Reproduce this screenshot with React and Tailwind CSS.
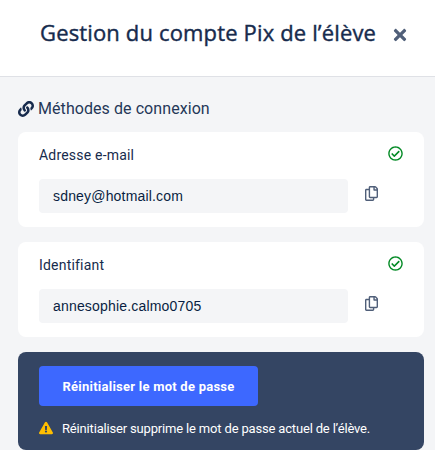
import React from 'react';
import {
  FaLink,
  FaTimes,
  FaRegCheckCircle,
  FaRegCopy,
  FaExclamationTriangle,
} from 'react-icons/fa';

const methods = [
  { label: 'Adresse e-mail', value: 'sdney@hotmail.com' },
  { label: 'Identifiant', value: 'annesophie.calmo0705' },
];

function MethodCard({ label, value }) {
  return (
    <li className="h-[95px] rounded-lg bg-white pl-[21px] pr-[21px] pt-[13px]">
      <div className="flex h-5 items-center justify-between">
        <span className="text-[14px] leading-5 tracking-[0.2px] text-[#172b4d]">{label}</span>
        <FaRegCheckCircle className="mt-[-3px] size-[15px] text-[#038a25]" />
      </div>
      <div className="mt-[14px] flex items-center">
        <div className="h-[34px] w-[309px] rounded bg-[#f4f5f7] px-[14px] font-['Liberation_Sans',sans-serif] text-[14px] leading-[34px] tracking-[0.18px] text-[#091e42]">
          {value}
        </div>
        <button type="button" aria-label="Copier" className="mb-[5px] ml-[17px]">
          <FaRegCopy className="h-[15px] w-[13px] text-[#505f79]" />
        </button>
      </div>
    </li>
  );
}

export default function App() {
  return (
    <div className="h-[450px] w-[435px] overflow-hidden bg-[#f4f5f7] font-['Roboto',sans-serif]">
      <header className="flex h-[77px] border-b border-[#dfe1e6] bg-white pl-10 pt-4">
        <h1 className="w-[351px] whitespace-nowrap font-['Open_Sans',sans-serif] text-[22px] font-medium leading-8 tracking-[0.15px] text-[#172b4d] [-webkit-text-stroke:0.4px_#172b4d]">
          Gestion du compte Pix de l’élève
        </h1>
        <button type="button" aria-label="Fermer" className="h-[38px]">
          <FaTimes className="size-[18px] text-[#505f79]" />
        </button>
      </header>

      <main className="pl-[18px] pr-[11px] pt-[20px]">
        <h2 className="flex h-[22px] items-center pt-[2px] text-[16px] leading-[22px] tracking-[0.07px] text-[#253858]">
          <FaLink className="mr-1 size-4 text-[#172b4d]" />
          Méthodes de connexion
        </h2>

        <ul className="mt-[13px] space-y-[15px]">
          {methods.map((method) => (
            <MethodCard key={method.label} label={method.label} value={method.value} />
          ))}
        </ul>

        <section className="mt-[15px] h-[98px] rounded-lg bg-[#344563] pl-[21px] pt-[14px]">
          <button
            type="button"
            className="h-10 w-[219px] rounded bg-[#3d68ff] pt-px text-[13px] font-bold tracking-[0.24px] text-white"
          >
            Réinitialiser le mot de passe
          </button>
          <p className="mt-[13px] flex h-5 items-center text-[13px] leading-5 tracking-[-0.17px] text-white">
            <FaExclamationTriangle className="mb-[3px] mr-[9px] size-[14px] text-[#ffbe00]" />
            Réinitialiser supprime le mot de passe actuel de l’élève.
          </p>
        </section>
      </main>
    </div>
  );
}
